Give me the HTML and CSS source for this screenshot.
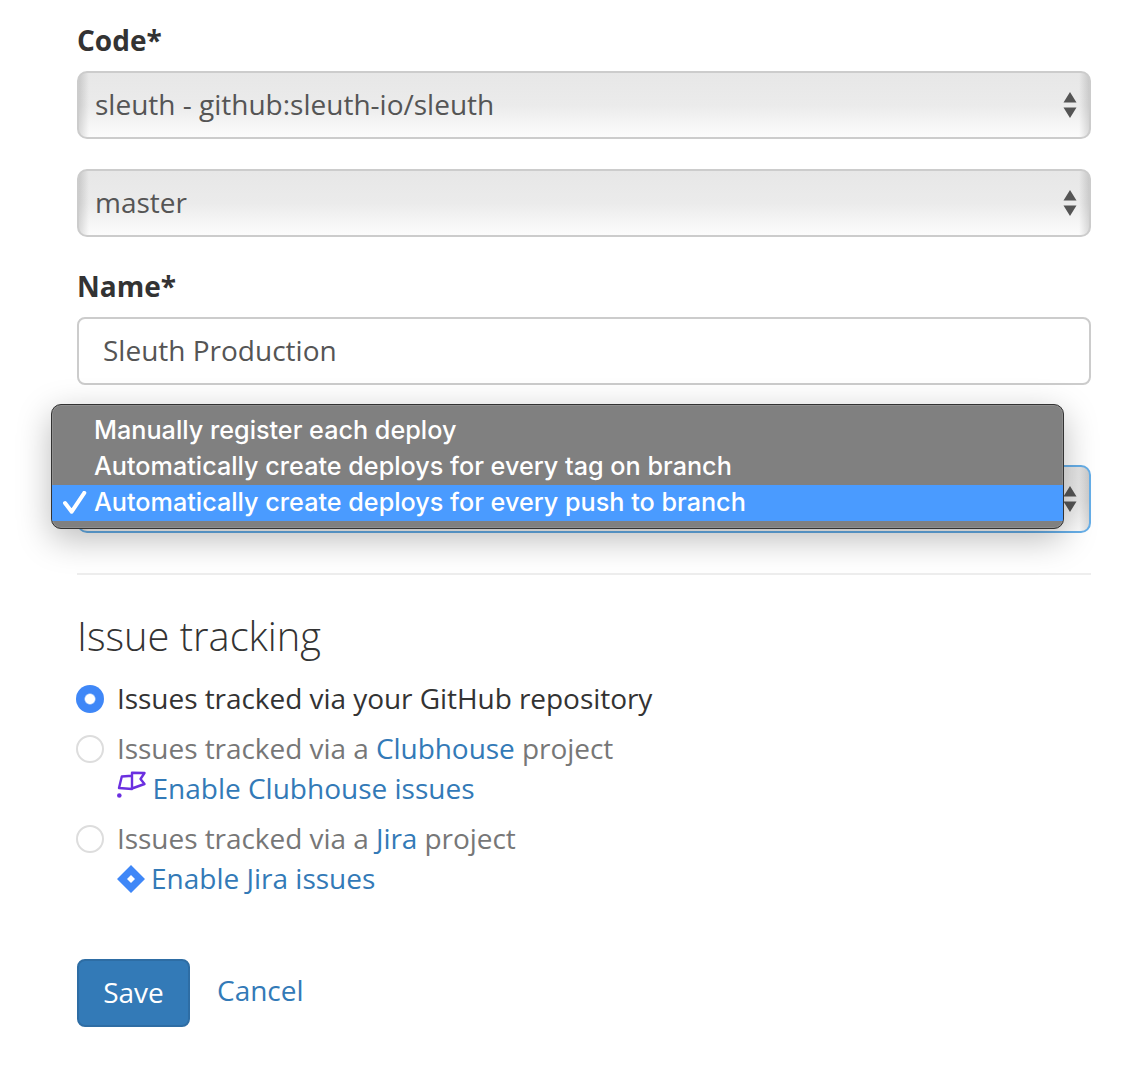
FILE: index.html
```html
<!DOCTYPE html>
<html lang="en">
<head>
<meta charset="utf-8">
<title>Sleuth Production</title>
<link rel="stylesheet" href="styles.css">
</head>
<body>
<main class="page">
  <form class="form">
    <div class="field">
      <div class="label">Code*</div>
      <div class="select">
        <span>sleuth - github:sleuth-io/sleuth</span>
        <svg class="arrows" width="14" height="26" viewBox="0 0 14 26"><path d="M7 0l6.500 10.500H.5zM7 26L.5 15.500h13z"/></svg>
      </div>
      <div class="select select-next">
        <span>master</span>
        <svg class="arrows" width="14" height="26" viewBox="0 0 14 26"><path d="M7 0l6.500 10.500H.5zM7 26L.5 15.500h13z"/></svg>
      </div>
    </div>
    <div class="field">
      <div class="label">Name*</div>
      <div class="input">Sleuth Production</div>
    </div>
    <div class="field field-deploy">
      <div class="select select-focus">
        <span></span>
        <svg class="arrows" width="14" height="26" viewBox="0 0 14 26"><path d="M7 0l6.500 10.500H.5zM7 26L.5 15.500h13z"/></svg>
      </div>
      <ul class="menu">
        <li class="menu-item">Manually register each deploy</li>
        <li class="menu-item">Automatically create deploys for every tag on branch</li>
        <li class="menu-item menu-item-active">
          <svg class="check" width="24" height="24" viewBox="0 0 24 24"><path d="M2 12l6.700 8.700L21.300 1.800"/></svg>
          Automatically create deploys for every push to branch
        </li>
      </ul>
    </div>
    <hr class="rule">
    <h3 class="heading">Issue tracking</h3>
    <div class="option">
      <span class="radio radio-on"></span>
      <span class="option-text">Issues tracked via your GitHub repository</span>
    </div>
    <div class="option option-off">
      <span class="radio"></span>
      <span class="option-text">Issues tracked via a <a class="link" href="#">Clubhouse</a> project</span>
    </div>
    <div class="enable">
      <svg class="icon icon-flag" width="30" height="30" viewBox="0 0 30 30"><path class="flag" d="M2 17L4.800 5.500 15 4.800V18zM15 4.800V1.800L27.500 2 23.500 8 27.500 13 15 17.500"/><circle class="dot" cx="2.300" cy="24.500" r="2.300"/></svg>
      <a class="link" href="#">Enable Clubhouse issues</a>
    </div>
    <div class="option option-off">
      <span class="radio"></span>
      <span class="option-text">Issues tracked via a <a class="link" href="#">Jira</a> project</span>
    </div>
    <div class="enable enable-jira">
      <svg class="icon" width="28" height="28" viewBox="0 0 28 28"><path class="jira" fill-rule="evenodd" d="M14 0L28 14 14 28 0 14zM14 10l-4 4 4 4 4-4z"/></svg>
      <a class="link" href="#">Enable Jira issues</a>
    </div>
    <div class="actions">
      <button class="save" type="button">Save</button>
      <a class="link cancel" href="#">Cancel</a>
    </div>
  </form>
</main>
</body>
</html>
```
FILE: styles.css
```css
* { box-sizing: border-box; }
html, body { margin: 0; padding: 0; background: #fff; }
body {
  font-family: "Open Sans", "Liberation Sans", sans-serif;
  font-size: 28px;
  line-height: 40px;
  color: #333;
}
.page { padding: 20px 40px 38px 77px; }
.field { margin-bottom: 29px; position: relative; }
.field-deploy { margin-top: 80px; margin-bottom: 40px; }
.label { font-weight: 700; margin-bottom: 11px; }
.select {
  height: 68px;
  border: 2px solid #ccc;
  border-radius: 10px;
  padding: 0 12px 2px 16px;
  display: flex;
  align-items: center;
  justify-content: space-between;
  color: #555;
  background:
    linear-gradient(to right, rgba(0,0,0,.13), rgba(0,0,0,0) 10px, rgba(0,0,0,0) calc(100% - 10px), rgba(0,0,0,.13)),
    linear-gradient(to bottom, #e7e7e7 0%, #ebebeb 50%, #fcfcfc 100%);
}
.select-next { margin-top: 30px; }
.select-focus { border-color: #66afe9; }
.arrows { fill: #555; flex: none; position: relative; top: 1px; }
.input {
  height: 68px;
  border: 2px solid #ccc;
  border-radius: 8px;
  padding: 0 24px 2px;
  display: flex;
  align-items: center;
  color: #555;
  background: #fff;
}
.menu {
  position: absolute;
  left: -26px;
  top: -61px;
  width: 1013px;
  height: 125px;
  margin: 0;
  padding: 8px 0 0;
  list-style: none;
  background: #808080;
  border: 1px solid #333;
  border-radius: 10px;
  box-shadow: 0 10px 34px rgba(0,0,0,.27), inset 0 0 0 1px rgba(255,255,255,.12);
  font-family: Inter, Roboto, "Liberation Sans", sans-serif;
  font-size: 25.2px;
  font-weight: 500;
  line-height: 34px;
  color: #fff;
  overflow: hidden;
}
.menu-item { height: 36px; padding-left: 42px; position: relative; white-space: nowrap; }
.menu-item-active { background: #4a9bff; }
.check {
  position: absolute;
  left: 11px;
  top: 6px;
  fill: none;
  stroke: #fff;
  stroke-width: 4;
  stroke-linecap: round;
  stroke-linejoin: round;
}
.rule { border: 0; border-top: 2px solid #eee; margin: 0 0 39px; }
.heading {
  font-size: 39.800px;
  font-weight: 300;
  line-height: 44px;
  margin: 0 0 21px;
  color: #333;
}
.option { display: flex; align-items: center; height: 40px; margin-top: 10px; gap: 13px; margin-left: -1px; }
.heading + .option { margin-top: 0; }
.option-text { letter-spacing: -0.05px; position: relative; top: -1px; }
.option-off { color: #777; }
.radio {
  width: 28px;
  height: 28px;
  border-radius: 50%;
  border: 2px solid #ddd;
  background: #fff;
  flex: none;
}
.radio-on {
  border: 0;
  background: radial-gradient(circle, #fff 0, #fff 4.500px, #3f87f7 6px);
}
.enable { display: flex; align-items: center; height: 40px; padding-left: 40px; gap: 7px; }
.enable .link { position: relative; top: -1px; }
.enable-jira { gap: 7px; }
.enable-jira .link { left: -1px; }
.icon { flex: none; }
.icon-flag { align-self: flex-start; margin-top: 2px; margin-right: -1.500px; }
.flag { fill: none; stroke: #6b2fe0; stroke-width: 2.400; stroke-linejoin: round; }
.dot { fill: #6b2fe0; }
.jira { fill: #3f87f7; }
.link { color: #337ab7; text-decoration: none; }
.actions { display: flex; align-items: center; margin-top: 60px; gap: 27px; }
.save {
  width: 113px;
  height: 68px;
  border: 2px solid #2e6da4;
  border-radius: 8px;
  background: #337ab7;
  color: #fff;
  font: inherit;
  padding: 0 0 2px;
}
.cancel { position: relative; top: -3px; }
```
